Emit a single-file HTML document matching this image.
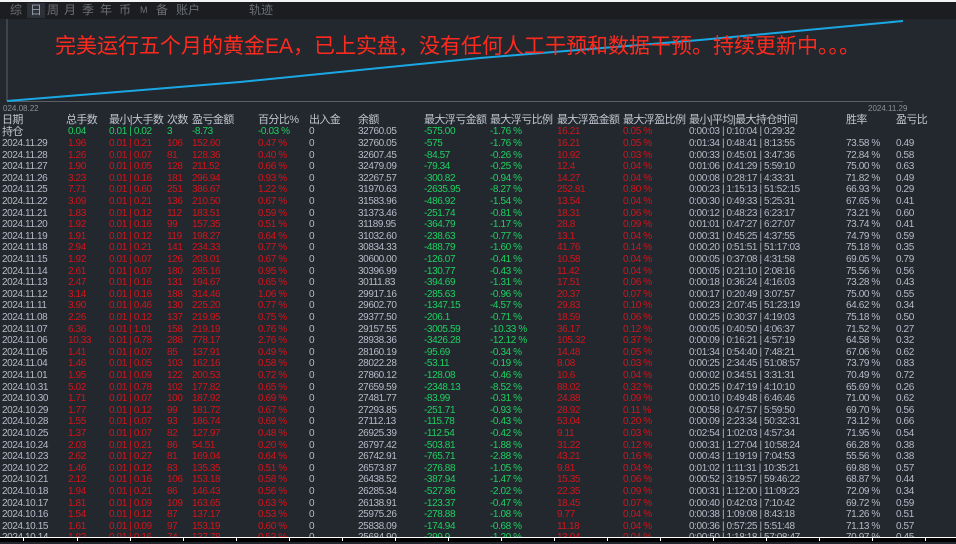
<!DOCTYPE html>
<html><head><meta charset="utf-8">
<style>
*{margin:0;padding:0;box-sizing:border-box}
body{width:956px;height:542px;background:#23282f;position:relative;overflow:hidden;font-family:"Liberation Sans","Noto Sans CJK SC",sans-serif;font-size:10px;letter-spacing:-0.4px;color:#b4bcc8}
.top{position:absolute;left:0;top:0;width:956px;height:2px;background:#f4f4f4}
.tabs{position:absolute;left:0;top:2px;width:956px;height:17px;background:#1b1d21;color:#6c7076;font-size:12px;letter-spacing:0}
.tabs span{position:absolute;top:1px;line-height:15px}
.sel{background:#2c3038;color:#9aa0a8;padding:0 3px;margin-left:-3px}
.title{position:absolute;left:55px;top:30px;font-size:21px;letter-spacing:0;color:#ff2a1e;white-space:nowrap}
.d{position:absolute;font-size:8px;color:#8a9098;letter-spacing:0}
.r{position:absolute;left:0;width:956px;height:12px;line-height:12px;white-space:nowrap}
.r span{position:absolute}
.h{color:#c0c6d0;font-size:11px;letter-spacing:-0.6px}
.a{left:2px}.b{left:68px}.c{left:109px}.e{left:167px}.f{left:192px}.g{left:258px}.i{left:309px}.j{left:358px}.k{left:424px}.l{left:490px}.m{left:557px}.n{left:623px}.o{left:689px}.p{left:846px}.q{left:896px}
.R .b,.R .c,.R .e,.R .f,.R .g,.R .m,.R .n{color:#d2141a}
.R .k,.R .l{color:#1ed060}
.G{color:#1ed060}
.bot{position:absolute;left:0;top:537px;width:956px;height:5px;background:#000}
.bl{position:absolute;left:0;top:537px;width:956px;height:1px;background:#fff}
.tk{position:absolute;top:538px;width:1px;height:3px;background:#fff}
</style></head><body>
<div class="top"></div>
<div class="tabs">
<span style="left:10px">综</span><span class="sel" style="left:30px">日</span><span style="left:47px">周</span><span style="left:64px">月</span><span style="left:82px">季</span><span style="left:100px">年</span><span style="left:119px">币</span><span style="left:140px;font-size:9px">M</span><span style="left:156px">备</span><span style="left:176px">账户</span><span style="left:249px">轨迹</span>
</div>
<svg style="position:absolute;left:0;top:0" width="956" height="110">
<line x1="7" y1="19" x2="7" y2="101" stroke="#5a5f66" stroke-width="1"/>
<line x1="7" y1="101.5" x2="903" y2="101.5" stroke="#5a5f66" stroke-width="1"/>
<polyline points="7,101 240,82 480,58 700,40 903,21" fill="none" stroke="#1aa8e4" stroke-width="2"/>
</svg>
<div class="title">完美运行五个月的黄金EA，已上实盘，没有任何人工干预和数据干预。持续更新中。。。</div>
<div class="d" style="left:3px;top:104px">024.08.22</div>
<div class="d" style="left:868px;top:104px">2024.11.29</div>

<div class="r h" style="top:114px"><span class="a">日期</span><span class="b" style="left:66px">总手数</span><span class="c">最小|大手数</span><span class="e">次数</span><span class="f">盈亏金额</span><span class="g">百分比%</span><span class="i">出入金</span><span class="j">余额</span><span class="k">最大浮亏金额</span><span class="l">最大浮亏比例</span><span class="m">最大浮盈金额</span><span class="n">最大浮盈比例</span><span class="o">最小|平均|最大持仓时间</span><span class="p">胜率</span><span class="q">盈亏比</span></div>
<div class="r" style="top:126px"><span class="a h">持仓</span><span class="b G">0.04</span><span class="c G">0.01 | 0.02</span><span class="e G">3</span><span class="f G">-8.73</span><span class="g G">-0.03 %</span><span class="i">0</span><span class="j">32760.05</span><span class="k G">-575.00</span><span class="l G">-1.76 %</span><span class="m" style="color:#d2141a">16.21</span><span class="n" style="color:#d2141a">0.05 %</span><span class="o">0:00:03 | 0:10:04 | 0:29:32</span></div>

<div class="r R" style="top:138px"><span class="a">2024.11.29</span><span class="b">1.96</span><span class="c">0.01 | 0.21</span><span class="e">106</span><span class="f">152.60</span><span class="g">0.47 %</span><span class="i">0</span><span class="j">32760.05</span><span class="k">-575</span><span class="l">-1.76 %</span><span class="m">16.21</span><span class="n">0.05 %</span><span class="o">0:01:34 | 0:48:41 | 8:13:55</span><span class="p">73.58 %</span><span class="q">0.49</span></div>
<div class="r R" style="top:149.6px"><span class="a">2024.11.28</span><span class="b">1.26</span><span class="c">0.01 | 0.07</span><span class="e">81</span><span class="f">128.36</span><span class="g">0.40 %</span><span class="i">0</span><span class="j">32607.45</span><span class="k">-84.57</span><span class="l">-0.26 %</span><span class="m">10.92</span><span class="n">0.03 %</span><span class="o">0:00:33 | 0:45:01 | 3:47:36</span><span class="p">72.84 %</span><span class="q">0.58</span></div>
<div class="r R" style="top:161.2px"><span class="a">2024.11.27</span><span class="b">1.90</span><span class="c">0.01 | 0.05</span><span class="e">128</span><span class="f">211.52</span><span class="g">0.66 %</span><span class="i">0</span><span class="j">32479.09</span><span class="k">-79.34</span><span class="l">-0.25 %</span><span class="m">12.4</span><span class="n">0.04 %</span><span class="o">0:01:06 | 0:41:29 | 5:59:10</span><span class="p">75.00 %</span><span class="q">0.63</span></div>
<div class="r R" style="top:172.8px"><span class="a">2024.11.26</span><span class="b">3.23</span><span class="c">0.01 | 0.16</span><span class="e">181</span><span class="f">296.94</span><span class="g">0.93 %</span><span class="i">0</span><span class="j">32267.57</span><span class="k">-300.82</span><span class="l">-0.94 %</span><span class="m">14.27</span><span class="n">0.04 %</span><span class="o">0:00:08 | 0:28:17 | 4:33:31</span><span class="p">71.82 %</span><span class="q">0.49</span></div>
<div class="r R" style="top:184.4px"><span class="a">2024.11.25</span><span class="b">7.71</span><span class="c">0.01 | 0.60</span><span class="e">251</span><span class="f">386.67</span><span class="g">1.22 %</span><span class="i">0</span><span class="j">31970.63</span><span class="k">-2635.95</span><span class="l">-8.27 %</span><span class="m">252.81</span><span class="n">0.80 %</span><span class="o">0:00:23 | 1:15:13 | 51:52:15</span><span class="p">66.93 %</span><span class="q">0.29</span></div>
<div class="r R" style="top:196px"><span class="a">2024.11.22</span><span class="b">3.09</span><span class="c">0.01 | 0.21</span><span class="e">136</span><span class="f">210.50</span><span class="g">0.67 %</span><span class="i">0</span><span class="j">31583.96</span><span class="k">-486.92</span><span class="l">-1.54 %</span><span class="m">13.54</span><span class="n">0.04 %</span><span class="o">0:00:30 | 0:49:33 | 5:25:31</span><span class="p">67.65 %</span><span class="q">0.41</span></div>
<div class="r R" style="top:207.6px"><span class="a">2024.11.21</span><span class="b">1.83</span><span class="c">0.01 | 0.12</span><span class="e">112</span><span class="f">183.51</span><span class="g">0.59 %</span><span class="i">0</span><span class="j">31373.46</span><span class="k">-251.74</span><span class="l">-0.81 %</span><span class="m">18.31</span><span class="n">0.06 %</span><span class="o">0:00:12 | 0:48:23 | 6:23:17</span><span class="p">73.21 %</span><span class="q">0.60</span></div>
<div class="r R" style="top:219.2px"><span class="a">2024.11.20</span><span class="b">1.92</span><span class="c">0.01 | 0.16</span><span class="e">99</span><span class="f">157.35</span><span class="g">0.51 %</span><span class="i">0</span><span class="j">31189.95</span><span class="k">-364.79</span><span class="l">-1.17 %</span><span class="m">28.8</span><span class="n">0.09 %</span><span class="o">0:01:01 | 0:47:27 | 6:27:07</span><span class="p">73.74 %</span><span class="q">0.41</span></div>
<div class="r R" style="top:230.8px"><span class="a">2024.11.19</span><span class="b">1.91</span><span class="c">0.01 | 0.12</span><span class="e">119</span><span class="f">198.27</span><span class="g">0.64 %</span><span class="i">0</span><span class="j">31032.60</span><span class="k">-238.63</span><span class="l">-0.77 %</span><span class="m">13.1</span><span class="n">0.04 %</span><span class="o">0:00:31 | 0:45:25 | 4:37:55</span><span class="p">74.79 %</span><span class="q">0.59</span></div>
<div class="r R" style="top:242.4px"><span class="a">2024.11.18</span><span class="b">2.94</span><span class="c">0.01 | 0.21</span><span class="e">141</span><span class="f">234.33</span><span class="g">0.77 %</span><span class="i">0</span><span class="j">30834.33</span><span class="k">-488.79</span><span class="l">-1.60 %</span><span class="m">41.76</span><span class="n">0.14 %</span><span class="o">0:00:20 | 0:51:51 | 51:17:03</span><span class="p">75.18 %</span><span class="q">0.35</span></div>
<div class="r R" style="top:254px"><span class="a">2024.11.15</span><span class="b">1.92</span><span class="c">0.01 | 0.07</span><span class="e">126</span><span class="f">203.01</span><span class="g">0.67 %</span><span class="i">0</span><span class="j">30600.00</span><span class="k">-126.07</span><span class="l">-0.41 %</span><span class="m">10.58</span><span class="n">0.04 %</span><span class="o">0:00:05 | 0:37:08 | 4:31:58</span><span class="p">69.05 %</span><span class="q">0.79</span></div>
<div class="r R" style="top:265.6px"><span class="a">2024.11.14</span><span class="b">2.61</span><span class="c">0.01 | 0.07</span><span class="e">180</span><span class="f">285.16</span><span class="g">0.95 %</span><span class="i">0</span><span class="j">30396.99</span><span class="k">-130.77</span><span class="l">-0.43 %</span><span class="m">11.42</span><span class="n">0.04 %</span><span class="o">0:00:05 | 0:21:10 | 2:08:16</span><span class="p">75.56 %</span><span class="q">0.56</span></div>
<div class="r R" style="top:277.2px"><span class="a">2024.11.13</span><span class="b">2.47</span><span class="c">0.01 | 0.16</span><span class="e">131</span><span class="f">194.67</span><span class="g">0.65 %</span><span class="i">0</span><span class="j">30111.83</span><span class="k">-394.69</span><span class="l">-1.31 %</span><span class="m">17.51</span><span class="n">0.06 %</span><span class="o">0:00:18 | 0:36:24 | 4:16:03</span><span class="p">73.28 %</span><span class="q">0.43</span></div>
<div class="r R" style="top:288.8px"><span class="a">2024.11.12</span><span class="b">3.14</span><span class="c">0.01 | 0.16</span><span class="e">188</span><span class="f">314.46</span><span class="g">1.06 %</span><span class="i">0</span><span class="j">29917.16</span><span class="k">-285.63</span><span class="l">-0.96 %</span><span class="m">20.37</span><span class="n">0.07 %</span><span class="o">0:00:17 | 0:20:49 | 3:07:57</span><span class="p">75.00 %</span><span class="q">0.55</span></div>
<div class="r R" style="top:300.4px"><span class="a">2024.11.11</span><span class="b">3.90</span><span class="c">0.01 | 0.46</span><span class="e">130</span><span class="f">225.20</span><span class="g">0.77 %</span><span class="i">0</span><span class="j">29602.70</span><span class="k">-1347.15</span><span class="l">-4.57 %</span><span class="m">29.83</span><span class="n">0.10 %</span><span class="o">0:00:23 | 2:07:45 | 51:23:19</span><span class="p">64.62 %</span><span class="q">0.34</span></div>
<div class="r R" style="top:312px"><span class="a">2024.11.08</span><span class="b">2.26</span><span class="c">0.01 | 0.12</span><span class="e">137</span><span class="f">219.95</span><span class="g">0.75 %</span><span class="i">0</span><span class="j">29377.50</span><span class="k">-206.1</span><span class="l">-0.71 %</span><span class="m">18.59</span><span class="n">0.06 %</span><span class="o">0:00:25 | 0:30:37 | 4:19:03</span><span class="p">75.18 %</span><span class="q">0.50</span></div>
<div class="r R" style="top:323.6px"><span class="a">2024.11.07</span><span class="b">6.36</span><span class="c">0.01 | 1.01</span><span class="e">158</span><span class="f">219.19</span><span class="g">0.76 %</span><span class="i">0</span><span class="j">29157.55</span><span class="k">-3005.59</span><span class="l">-10.33 %</span><span class="m">36.17</span><span class="n">0.12 %</span><span class="o">0:00:05 | 0:40:50 | 4:06:37</span><span class="p">71.52 %</span><span class="q">0.27</span></div>
<div class="r R" style="top:335.2px"><span class="a">2024.11.06</span><span class="b">10.33</span><span class="c">0.01 | 0.78</span><span class="e">288</span><span class="f">778.17</span><span class="g">2.76 %</span><span class="i">0</span><span class="j">28938.36</span><span class="k">-3426.28</span><span class="l">-12.12 %</span><span class="m">105.32</span><span class="n">0.37 %</span><span class="o">0:00:09 | 0:16:21 | 4:57:19</span><span class="p">64.58 %</span><span class="q">0.32</span></div>
<div class="r R" style="top:346.8px"><span class="a">2024.11.05</span><span class="b">1.41</span><span class="c">0.01 | 0.07</span><span class="e">85</span><span class="f">137.91</span><span class="g">0.49 %</span><span class="i">0</span><span class="j">28160.19</span><span class="k">-95.69</span><span class="l">-0.34 %</span><span class="m">14.48</span><span class="n">0.05 %</span><span class="o">0:01:34 | 0:54:40 | 7:48:21</span><span class="p">67.06 %</span><span class="q">0.62</span></div>
<div class="r R" style="top:358.4px"><span class="a">2024.11.04</span><span class="b">1.46</span><span class="c">0.01 | 0.05</span><span class="e">103</span><span class="f">162.16</span><span class="g">0.58 %</span><span class="i">0</span><span class="j">28022.28</span><span class="k">-53.11</span><span class="l">-0.19 %</span><span class="m">8.08</span><span class="n">0.03 %</span><span class="o">0:00:25 | 2:34:45 | 51:08:57</span><span class="p">73.79 %</span><span class="q">0.83</span></div>
<div class="r R" style="top:370px"><span class="a">2024.11.01</span><span class="b">1.95</span><span class="c">0.01 | 0.09</span><span class="e">122</span><span class="f">200.53</span><span class="g">0.72 %</span><span class="i">0</span><span class="j">27860.12</span><span class="k">-128.08</span><span class="l">-0.46 %</span><span class="m">10.6</span><span class="n">0.04 %</span><span class="o">0:00:02 | 0:34:51 | 3:31:31</span><span class="p">70.49 %</span><span class="q">0.72</span></div>
<div class="r R" style="top:381.6px"><span class="a">2024.10.31</span><span class="b">5.02</span><span class="c">0.01 | 0.78</span><span class="e">102</span><span class="f">177.82</span><span class="g">0.65 %</span><span class="i">0</span><span class="j">27659.59</span><span class="k">-2348.13</span><span class="l">-8.52 %</span><span class="m">88.02</span><span class="n">0.32 %</span><span class="o">0:00:25 | 0:47:19 | 4:10:10</span><span class="p">65.69 %</span><span class="q">0.26</span></div>
<div class="r R" style="top:393.2px"><span class="a">2024.10.30</span><span class="b">1.71</span><span class="c">0.01 | 0.07</span><span class="e">100</span><span class="f">187.92</span><span class="g">0.69 %</span><span class="i">0</span><span class="j">27481.77</span><span class="k">-83.99</span><span class="l">-0.31 %</span><span class="m">24.88</span><span class="n">0.09 %</span><span class="o">0:00:10 | 0:49:48 | 6:46:46</span><span class="p">71.00 %</span><span class="q">0.62</span></div>
<div class="r R" style="top:404.8px"><span class="a">2024.10.29</span><span class="b">1.77</span><span class="c">0.01 | 0.12</span><span class="e">99</span><span class="f">181.72</span><span class="g">0.67 %</span><span class="i">0</span><span class="j">27293.85</span><span class="k">-251.71</span><span class="l">-0.93 %</span><span class="m">28.92</span><span class="n">0.11 %</span><span class="o">0:00:58 | 0:47:57 | 5:59:50</span><span class="p">69.70 %</span><span class="q">0.56</span></div>
<div class="r R" style="top:416.4px"><span class="a">2024.10.28</span><span class="b">1.55</span><span class="c">0.01 | 0.07</span><span class="e">93</span><span class="f">186.74</span><span class="g">0.69 %</span><span class="i">0</span><span class="j">27112.13</span><span class="k">-115.78</span><span class="l">-0.43 %</span><span class="m">53.04</span><span class="n">0.20 %</span><span class="o">0:00:09 | 2:23:34 | 50:32:31</span><span class="p">73.12 %</span><span class="q">0.66</span></div>
<div class="r R" style="top:428px"><span class="a">2024.10.25</span><span class="b">1.37</span><span class="c">0.01 | 0.07</span><span class="e">82</span><span class="f">127.97</span><span class="g">0.48 %</span><span class="i">0</span><span class="j">26925.39</span><span class="k">-112.54</span><span class="l">-0.42 %</span><span class="m">9.11</span><span class="n">0.03 %</span><span class="o">0:02:54 | 1:02:03 | 4:57:34</span><span class="p">71.95 %</span><span class="q">0.54</span></div>
<div class="r R" style="top:439.6px"><span class="a">2024.10.24</span><span class="b">2.03</span><span class="c">0.01 | 0.21</span><span class="e">86</span><span class="f">54.51</span><span class="g">0.20 %</span><span class="i">0</span><span class="j">26797.42</span><span class="k">-503.81</span><span class="l">-1.88 %</span><span class="m">31.22</span><span class="n">0.12 %</span><span class="o">0:00:31 | 1:27:04 | 10:58:24</span><span class="p">66.28 %</span><span class="q">0.38</span></div>
<div class="r R" style="top:451.2px"><span class="a">2024.10.23</span><span class="b">2.62</span><span class="c">0.01 | 0.27</span><span class="e">81</span><span class="f">169.04</span><span class="g">0.64 %</span><span class="i">0</span><span class="j">26742.91</span><span class="k">-765.71</span><span class="l">-2.88 %</span><span class="m">43.21</span><span class="n">0.16 %</span><span class="o">0:00:43 | 1:19:19 | 7:04:53</span><span class="p">55.56 %</span><span class="q">0.38</span></div>
<div class="r R" style="top:462.8px"><span class="a">2024.10.22</span><span class="b">1.46</span><span class="c">0.01 | 0.12</span><span class="e">83</span><span class="f">135.35</span><span class="g">0.51 %</span><span class="i">0</span><span class="j">26573.87</span><span class="k">-276.88</span><span class="l">-1.05 %</span><span class="m">9.81</span><span class="n">0.04 %</span><span class="o">0:01:02 | 1:11:31 | 10:35:21</span><span class="p">69.88 %</span><span class="q">0.57</span></div>
<div class="r R" style="top:474.4px"><span class="a">2024.10.21</span><span class="b">2.12</span><span class="c">0.01 | 0.16</span><span class="e">106</span><span class="f">153.18</span><span class="g">0.58 %</span><span class="i">0</span><span class="j">26438.52</span><span class="k">-387.94</span><span class="l">-1.47 %</span><span class="m">15.35</span><span class="n">0.06 %</span><span class="o">0:00:52 | 3:19:57 | 59:46:22</span><span class="p">68.87 %</span><span class="q">0.44</span></div>
<div class="r R" style="top:486px"><span class="a">2024.10.18</span><span class="b">1.94</span><span class="c">0.01 | 0.21</span><span class="e">86</span><span class="f">146.43</span><span class="g">0.56 %</span><span class="i">0</span><span class="j">26285.34</span><span class="k">-527.86</span><span class="l">-2.02 %</span><span class="m">22.35</span><span class="n">0.09 %</span><span class="o">0:00:31 | 1:12:00 | 11:09:23</span><span class="p">72.09 %</span><span class="q">0.34</span></div>
<div class="r R" style="top:497.6px"><span class="a">2024.10.17</span><span class="b">1.81</span><span class="c">0.01 | 0.09</span><span class="e">109</span><span class="f">163.65</span><span class="g">0.63 %</span><span class="i">0</span><span class="j">26138.91</span><span class="k">-123.37</span><span class="l">-0.47 %</span><span class="m">18.45</span><span class="n">0.07 %</span><span class="o">0:00:40 | 0:42:03 | 7:10:42</span><span class="p">69.72 %</span><span class="q">0.59</span></div>
<div class="r R" style="top:509.2px"><span class="a">2024.10.16</span><span class="b">1.54</span><span class="c">0.01 | 0.12</span><span class="e">87</span><span class="f">137.17</span><span class="g">0.53 %</span><span class="i">0</span><span class="j">25975.26</span><span class="k">-278.88</span><span class="l">-1.08 %</span><span class="m">9.77</span><span class="n">0.04 %</span><span class="o">0:00:38 | 1:09:08 | 8:43:18</span><span class="p">71.26 %</span><span class="q">0.51</span></div>
<div class="r R" style="top:520.8px"><span class="a">2024.10.15</span><span class="b">1.61</span><span class="c">0.01 | 0.09</span><span class="e">97</span><span class="f">153.19</span><span class="g">0.60 %</span><span class="i">0</span><span class="j">25838.09</span><span class="k">-174.94</span><span class="l">-0.68 %</span><span class="m">11.18</span><span class="n">0.04 %</span><span class="o">0:00:36 | 0:57:25 | 5:51:48</span><span class="p">71.13 %</span><span class="q">0.57</span></div>
<div class="r R" style="top:532.4px"><span class="a">2024.10.14</span><span class="b">1.82</span><span class="c">0.01 | 0.16</span><span class="e">74</span><span class="f">137.78</span><span class="g">0.53 %</span><span class="i">0</span><span class="j">25684.90</span><span class="k">-299.9</span><span class="l">-1.20 %</span><span class="m">13.04</span><span class="n">0.04 %</span><span class="o">0:00:50 | 1:18:18 | 57:08:47</span><span class="p">70.97 %</span><span class="q">0.45</span></div>

<div class="bot"></div>
<div class="bl"></div>
<div class="tk" style="left:23px"></div><div class="tk" style="left:77px"></div><div class="tk" style="left:130px"></div><div class="tk" style="left:183px"></div><div class="tk" style="left:236px"></div><div class="tk" style="left:289px"></div><div class="tk" style="left:342px"></div><div class="tk" style="left:395px"></div><div class="tk" style="left:448px"></div><div class="tk" style="left:501px"></div><div class="tk" style="left:554px"></div><div class="tk" style="left:607px"></div><div class="tk" style="left:660px"></div><div class="tk" style="left:713px"></div><div class="tk" style="left:766px"></div><div class="tk" style="left:819px"></div><div class="tk" style="left:872px"></div><div class="tk" style="left:925px"></div>
</body></html>
